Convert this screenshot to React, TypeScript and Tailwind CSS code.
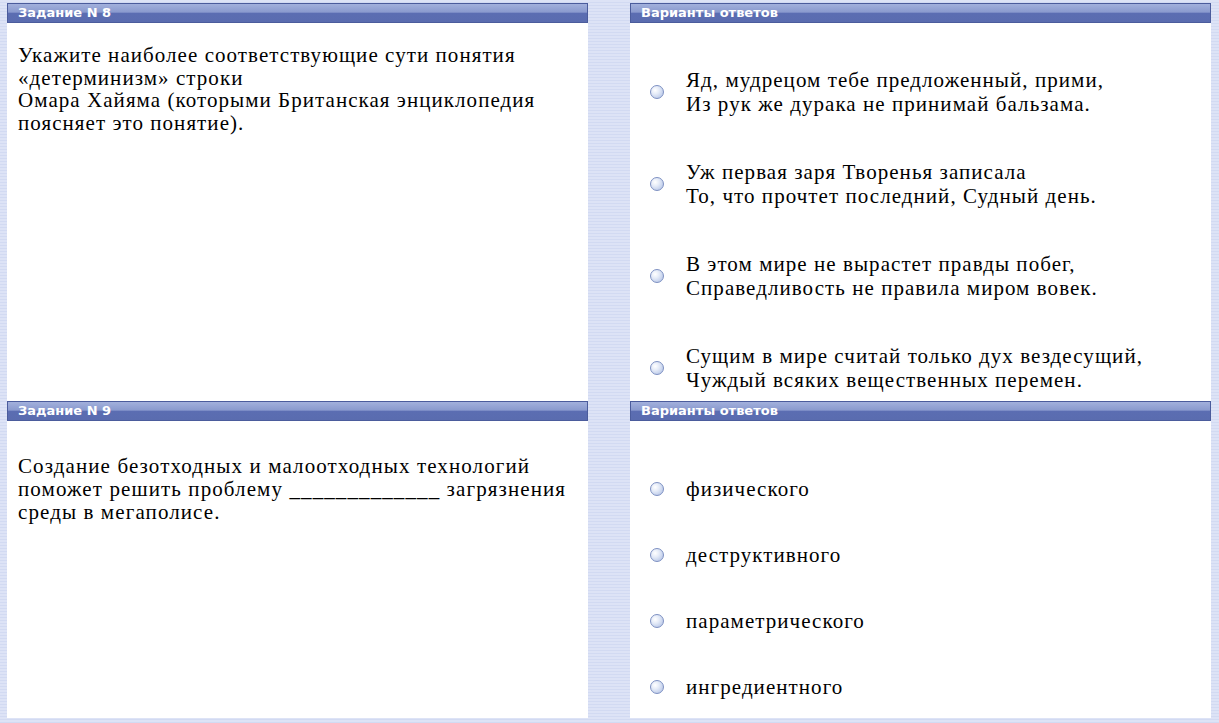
import React from "react";

const serif = { fontFamily: '"Liberation Serif", "Times New Roman", serif' };
const sans = { fontFamily: '"DejaVu Sans", Verdana, sans-serif' };

function Header({ title }: { title: string }) {
  return (
    <div
      className="h-[20px] flex items-center pl-[10px] text-white text-[13px] font-bold border border-[#4b5c9c] bg-[linear-gradient(to_bottom,#a2b0dc_0%,#8a9ace_45%,#5b6db2_52%,#5a6caf_100%)]"
      style={sans}
    >
      {title}
    </div>
  );
}

function Radio() {
  return (
    <span className="inline-block w-[14px] h-[14px] rounded-full border border-[#7d90c2] bg-[radial-gradient(circle_at_35%_35%,#ffffff_0%,#e6ecf8_35%,#a9bbe2_100%)] shrink-0" />
  );
}

function Option({ lines }: { lines: string[] }) {
  return (
    <div className="flex items-center">
      <div className="w-[56px] flex justify-start pl-[20px]">
        <Radio />
      </div>
      <div className="text-[21px] leading-[24px] tracking-[1.05px] text-black" style={serif}>
        {lines.map((l, i) => (
          <div key={i}>{l}</div>
        ))}
      </div>
    </div>
  );
}

export default function App() {
  return (
    <div className="w-[1219px] h-[723px] overflow-hidden bg-[repeating-linear-gradient(to_bottom,#dde3f6_0px,#dde3f6_2px,#d2daf2_2px,#d2daf2_3px)] pl-[7px] pt-[3px]">
      <div className="grid grid-cols-[581px_581px] gap-x-[42px]">
        {/* Задание 8 */}
        <div className="flex flex-col h-[398px]">
          <Header title="Задание N 8" />
          <div className="flex-1 bg-white pl-[11px] pt-[21px] text-[21px] leading-[22.5px] tracking-[1.05px] text-black" style={serif}>
            <div>Укажите наиболее соответствующие сути понятия</div>
            <div>«детерминизм» строки</div>
            <div>Омара Хайяма (которыми Британская энциклопедия</div>
            <div>поясняет это понятие).</div>
          </div>
        </div>
        <div className="flex flex-col h-[398px]">
          <Header title="Варианты ответов" />
          <div className="flex-1 bg-white pt-[45px] flex flex-col gap-[44px]">
            <Option lines={["Яд, мудрецом тебе предложенный, прими,", "Из рук же дурака не принимай бальзама."]} />
            <Option lines={["Уж первая заря Творенья записала", "То, что прочтет последний, Судный день."]} />
            <Option lines={["В этом мире не вырастет правды побег,", "Справедливость не правила миром вовек."]} />
            <Option lines={["Сущим в мире считай только дух вездесущий,", "Чуждый всяких вещественных перемен."]} />
          </div>
        </div>

        {/* Задание 9 */}
        <div className="flex flex-col h-[317px]">
          <Header title="Задание N 9" />
          <div className="flex-1 bg-white pl-[11px] pt-[34px] text-[21px] leading-[23px] tracking-[1.1px] text-black" style={serif}>
            <div>Создание безотходных и малоотходных технологий</div>
            <div>поможет решить проблему _____________ загрязнения</div>
            <div>среды в мегаполисе.</div>
          </div>
        </div>
        <div className="flex flex-col h-[317px]">
          <Header title="Варианты ответов" />
          <div className="flex-1 bg-white pt-[56px] flex flex-col gap-[42px]">
            <Option lines={["физического"]} />
            <Option lines={["деструктивного"]} />
            <Option lines={["параметрического"]} />
            <Option lines={["ингредиентного"]} />
          </div>
        </div>
      </div>
    </div>
  );
}
